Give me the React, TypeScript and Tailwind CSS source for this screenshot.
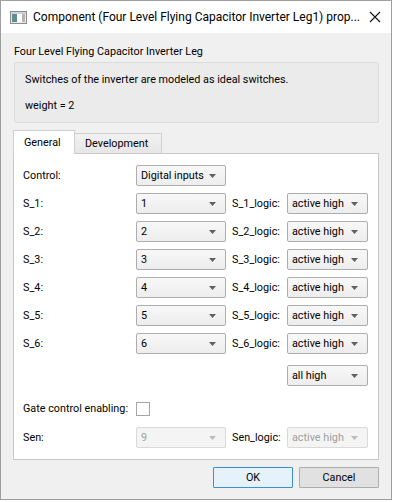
import { ReactElement } from "react";

function Arrow({ disabled }: { disabled?: boolean }): ReactElement {
  return (
    <svg width="7" height="4" viewBox="0 0 7 4" className="shrink-0">
      <path d="M0 0 L7 0 L3.5 4 Z" fill={disabled ? "#bcbcbc" : "#606060"} />
    </svg>
  );
}

function Combo({
  value,
  width,
  disabled,
}: {
  value: string;
  width: string;
  disabled?: boolean;
}): ReactElement {
  return (
    <div
      className={`${width} h-[21px] shrink-0 flex items-center justify-between pl-[4px] pr-[9px] rounded-[2px] border whitespace-nowrap ${
        disabled
          ? "border-[#d9d9d9] bg-[#f4f4f4] text-[#a0a0a0]"
          : "border-[#adadad] bg-gradient-to-b from-[#f8f8f8] to-[#ededed] text-black"
      }`}
    >
      <span>{value}</span>
      <Arrow disabled={disabled} />
    </div>
  );
}

function SwitchRow({ n }: { n: number }): ReactElement {
  return (
    <div className="flex items-center h-[21px]">
      <div className="w-[113px] shrink-0">S_{n}:</div>
      <Combo value={String(n)} width="w-[90px]" />
      <div className="w-[55px] shrink-0 ml-[6px] whitespace-nowrap">S_{n}_logic:</div>
      <Combo value="active high" width="w-[81px]" />
    </div>
  );
}

export default function App(): ReactElement {
  return (
    <div className="w-[393px] h-[502px] bg-white font-['Segoe_UI','Roboto',sans-serif] text-[10.8px] leading-[16px] text-black whitespace-nowrap">
      <div className="w-[392px] h-[500px] border border-[#9f9f9f] bg-[#f0f0f0] flex flex-col">
        {/* Title bar */}
        <div className="h-[32px] bg-white flex items-center pl-[9px] pr-[10px]">
          <svg width="17" height="13" viewBox="0 0 17 13" className="shrink-0">
            <rect x="0.5" y="0.5" width="16" height="12" fill="#e8e8e8" stroke="#8c8c8c" />
            <rect x="1" y="1" width="15" height="2" fill="#c9d3dc" />
            <rect x="2" y="3" width="5" height="8" fill="#5f8c8c" />
            <rect x="7" y="3" width="5" height="8" fill="#ffffff" />
            <rect x="12" y="3" width="3" height="8" fill="#b5b5b5" />
          </svg>
          <div className="ml-[6px] flex-1 text-[12px] overflow-hidden">
            Component (Four Level Flying Capacitor Inverter Leg1) prop...
          </div>
          <svg width="12" height="12" viewBox="0 0 12 12" className="ml-[8px] shrink-0">
            <path d="M1 1 L11 11 M11 1 L1 11" stroke="#111" strokeWidth="1.1" />
          </svg>
        </div>

        {/* Body */}
        <div className="flex flex-col px-[12px] pt-[11px]">
          <div className="pl-[1px]">Four Level Flying Capacitor Inverter Leg</div>

          <div className="mt-[2px] ml-[1px] h-[61px] border border-[#dcdcdc] bg-[#ebebeb] rounded-[2px] flex flex-col pl-[10px] pt-[9px]">
            <div>Switches of the inverter are modeled as ideal switches.</div>
            <div className="mt-[10px]">weight = 2</div>
          </div>

          {/* Tabs */}
          <div className="mt-[7px] flex items-end h-[23px]">
            <div className="h-[24px] w-[62px] bg-white border border-[#d0d0d0] border-b-0 flex items-center pl-[10px] relative z-10 -mb-px">
              General
            </div>
            <div className="h-[20px] w-[87px] bg-gradient-to-b from-[#f2f2f2] to-[#e6e6e6] border border-[#d0d0d0] border-l-0 border-b-0 flex items-center pl-[10px]">
              Development
            </div>
          </div>

          {/* Pane */}
          <div className="h-[307px] w-[366px] bg-white border border-[#c8c8c8] flex flex-col pl-[9px] pt-[11px]">
            <div className="flex items-center h-[21px]">
              <div className="w-[113px] shrink-0">Control:</div>
              <Combo value="Digital inputs" width="w-[90px]" />
            </div>
            <div className="flex flex-col gap-[7px] mt-[7px]">
              {[1, 2, 3, 4, 5, 6].map((n) => (
                <SwitchRow key={n} n={n} />
              ))}
            </div>
            <div className="flex mt-[11px] pl-[264px]">
              <Combo value="all high" width="w-[81px]" />
            </div>
            <div className="flex items-center h-[14px] mt-[16px]">
              <div className="w-[113px] shrink-0">Gate control enabling:</div>
              <div className="w-[14px] h-[14px] border border-[#a6a6a6] bg-white" />
            </div>
            <div className="flex items-center h-[21px] mt-[11px]">
              <div className="w-[113px] shrink-0">Sen:</div>
              <Combo value="9" width="w-[90px]" disabled />
              <div className="w-[55px] shrink-0 ml-[6px]">Sen_logic:</div>
              <Combo value="active high" width="w-[81px]" disabled />
            </div>
          </div>

          {/* Buttons */}
          <div className="flex justify-end gap-[6px] mt-[7px]">
            <div className="w-[80px] h-[21px] border border-[#3c8ede] rounded-[1px] bg-[#e5f1fb] flex items-center justify-center">
              OK
            </div>
            <div className="w-[80px] h-[21px] border border-[#adadad] rounded-[1px] bg-[#e1e1e1] flex items-center justify-center">
              Cancel
            </div>
          </div>
        </div>
      </div>
    </div>
  );
}
